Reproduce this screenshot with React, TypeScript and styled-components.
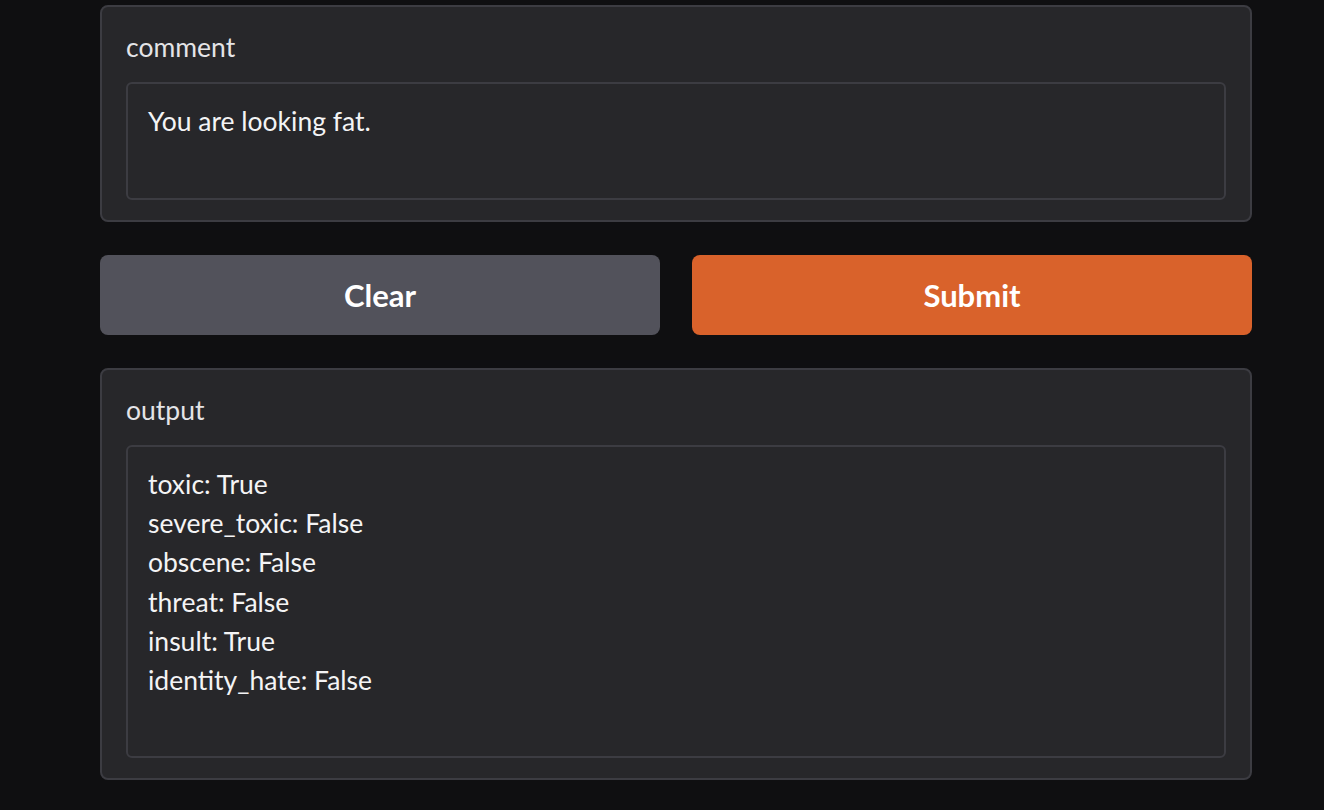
import React from 'react';
import { styled, createGlobalStyle } from 'styled-components';

const GlobalStyle = createGlobalStyle`
  html, body {
    margin: 0;
    padding: 0;
    background: #0f0f11;
    font-family: Lato, "Noto Sans", sans-serif;
  }
`;

const Page = styled.div`
  width: 1324px;
  height: 810px;
  overflow: hidden;
  box-sizing: border-box;
  padding: 5px 72px 0 100px;
  display: flex;
  flex-direction: column;
  gap: 33px;
`;

const Panel = styled.div`
  background: #27272a;
  border: 2px solid #3c3c42;
  border-radius: 8px;
  padding: 24px 24px 20px;
  display: flex;
  flex-direction: column;
  gap: 19px;
`;

const Label = styled.span`
  color: #e4e4e7;
  font-size: 26.5px;
  line-height: 32px;
`;

const TextBox = styled.div<{ $rows: number }>`
  border: 2px solid #3c3c42;
  border-radius: 6px;
  padding: 18px 20px;
  color: #f4f4f5;
  font-size: 26.5px;
  line-height: 39.2px;
  min-height: ${(p) => p.$rows * 39}px;
  white-space: pre-line;
`;

const ButtonRow = styled.div`
  display: grid;
  grid-template-columns: 1fr 1fr;
  gap: 32px;
`;

const Button = styled.button<{ $primary?: boolean }>`
  height: 80px;
  border: none;
  border-radius: 8px;
  background: ${(p) => (p.$primary ? '#d9622b' : '#52525b')};
  color: #ffffff;
  font-family: inherit;
  font-size: 31px;
  font-weight: 700;
  cursor: pointer;
`;

const results = [
  'toxic: True',
  'severe_toxic: False',
  'obscene: False',
  'threat: False',
  'insult: True',
  'identity_hate: False',
];

const App: React.FC = () => {
  return (
    <>
      <GlobalStyle />
      <Page>
        <Panel>
          <Label>comment</Label>
          <TextBox $rows={2}>You are looking fat.</TextBox>
        </Panel>
        <ButtonRow>
          <Button>Clear</Button>
          <Button $primary>Submit</Button>
        </ButtonRow>
        <Panel>
          <Label>output</Label>
          <TextBox $rows={7}>{results.join('\n')}</TextBox>
        </Panel>
      </Page>
    </>
  );
};

export default App;
